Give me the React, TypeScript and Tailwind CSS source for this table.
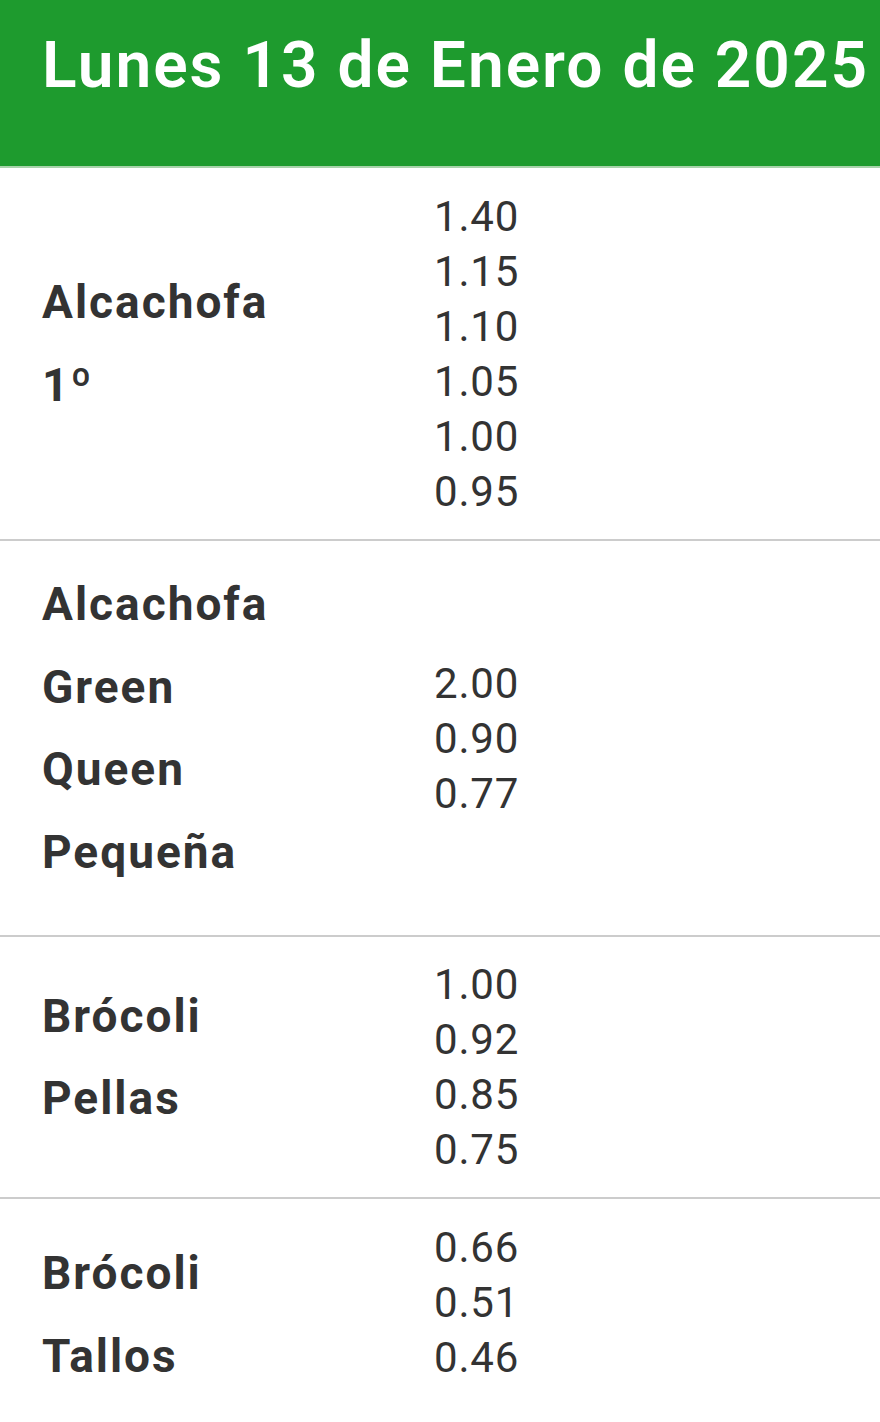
import React from 'react';

type Row = {
  labels: string[];
  prices: string[];
  height?: string;
};

const rows: Row[] = [
  { labels: ['Alcachofa', '1º'], prices: ['1.40', '1.15', '1.10', '1.05', '1.00', '0.95'], height: 'h-[373px]' },
  { labels: ['Alcachofa', 'Green', 'Queen', 'Pequeña'], prices: ['2.00', '0.90', '0.77'], height: 'h-[396px]' },
  { labels: ['Brócoli', 'Pellas'], prices: ['1.00', '0.92', '0.85', '0.75'], height: 'h-[262px]' },
];

function PriceRow({ row }: { row: Row }) {
  return (
    <div className={`grid grid-cols-[392px_1fr] items-center border-b-2 border-[#cccccc] pl-[42px] ${row.height}`}>
      <div className="mb-5 text-[46px] font-bold leading-[82.5px] tracking-[2px]">
        {row.labels.map(l => (
          <div key={l}>{l}</div>
        ))}
      </div>
      <div className="text-[42px] leading-[55px] tracking-[0.8px]">
        {row.prices.map((p, i) => (
          <div key={i}>{p}</div>
        ))}
      </div>
    </div>
  );
}

export default function App() {
  return (
    <div className="min-h-[1422px] bg-white text-[#333333]" style={{ fontFamily: 'Roboto, "Noto Sans", sans-serif' }}>
      <header className="h-[168px] overflow-hidden whitespace-nowrap border-b-2 border-[#a9d3ab] bg-[#1e9b2e] pl-[42px] pt-[34px]">
        <h1 className="text-[64px] font-semibold leading-none tracking-[2px] text-white">Lunes 13 de Enero de 2025</h1>
      </header>
      {rows.map((r, i) => (
        <PriceRow key={i} row={r} />
      ))}
      {/* last row sits a bit differently */}
      <div className="grid grid-cols-[392px_1fr] items-start pl-[42px]">
        <div className="pt-[33px] text-[46px] font-bold leading-[82.5px] tracking-[2px]">
          <div>Brócoli</div>
          <div>Tallos</div>
        </div>
        <div className="pt-[21px] text-[42px] leading-[55px] tracking-[0.8px]">
          <div>0.66</div>
          <div>0.51</div>
          <div>0.46</div>
        </div>
      </div>
    </div>
  );
}
